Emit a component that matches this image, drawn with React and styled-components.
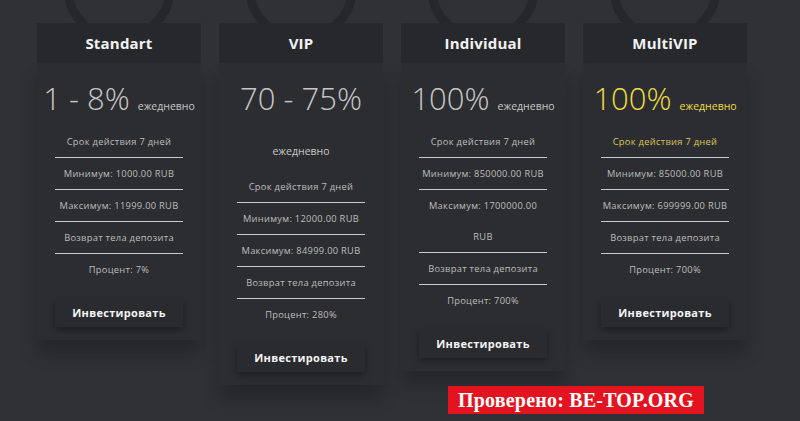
import styled, { createGlobalStyle } from 'styled-components'

const GlobalStyle = createGlobalStyle`
  html, body {
    margin: 0;
    padding: 0;
    background: #303135;
    font-family: "Open Sans", "Liberation Sans", sans-serif;
  }
`

const plans = [
  {
    title: 'Standart',
    rate: '1 - 8%',
    items: ['Срок действия 7 дней', 'Минимум: 1000.00 RUB', 'Максимум: 11999.00 RUB', 'Возврат тела депозита', 'Процент: 7%'],
  },
  {
    title: 'VIP',
    rate: '70 - 75%',
    items: ['Срок действия 7 дней', 'Минимум: 12000.00 RUB', 'Максимум: 84999.00 RUB', 'Возврат тела депозита', 'Процент: 280%'],
  },
  {
    title: 'Individual',
    rate: '100%',
    items: ['Срок действия 7 дней', 'Минимум: 850000.00 RUB', 'Максимум: 1700000.00 RUB', 'Возврат тела депозита', 'Процент: 700%'],
  },
  {
    title: 'MultiVIP',
    rate: '100%',
    gold: true,
    items: ['Срок действия 7 дней', 'Минимум: 85000.00 RUB', 'Максимум: 699999.00 RUB', 'Возврат тела депозита', 'Процент: 700%'],
  },
]

const Page = styled.div`
  position: relative;
  width: 800px;
  height: 421px;
  overflow: hidden;
`

const Row = styled.div`
  display: flex;
  align-items: flex-start;
  gap: 18px;
  padding: 23px 0 0 37px;
`

const Card = styled.div`
  position: relative;
  isolation: isolate;
  width: 164px;
`

const Ring = styled.div`
  position: absolute;
  z-index: -1;
  left: 50%;
  top: -92px;
  width: 112px;
  height: 112px;
  margin-left: -56px;
  box-sizing: border-box;
  border: 9px solid #26272a;
  border-radius: 50%;
  filter: blur(0.6px);
`

const Header = styled.div`
  height: 40px;
  display: flex;
  align-items: center;
  justify-content: center;
  background: #27282c;
  color: #f2f2f2;
  font-size: 15px;
  font-weight: 700;
  letter-spacing: 0.2px;
`

const Body = styled.div`
  background: #2c2d31;
  padding: 0 0 13px;
  box-shadow: 0 14px 16px rgba(0, 0, 0, 0.22);
  display: flex;
  flex-direction: column;
  align-items: center;
`

const Rate = styled.div`
  padding: 13px 0 5px;
  text-align: center;
  font-size: 31px;
  font-weight: 300;
  line-height: 45px;
  color: ${p => (p.$gold ? '#ecdc45' : '#c6c6c6')};
`

const Daily = styled.span`
  font-size: 10.5px;
  font-weight: 400;
  line-height: 1;
`

const List = styled.ul`
  list-style: none;
  margin: 0;
  padding: 0;
  width: 128px;
`

const Item = styled.li`
  text-align: center;
  font-size: 9.3px;
  line-height: 31px;
  letter-spacing: 0.3px;
  color: ${p => (p.$gold ? '#dcc558' : '#bdbdbd')};
  border-bottom: 1px solid #c9c9c9;
  &:last-child {
    border-bottom: none;
  }
`

const Button = styled.button`
  margin-top: 13px;
  width: 128px;
  height: 29px;
  border: none;
  background: #2a2b2f;
  box-shadow: 0 3px 7px rgba(0, 0, 0, 0.35);
  color: #f4f4f4;
  font-family: "Open Sans", "Liberation Sans", sans-serif;
  font-size: 11px;
  font-weight: 700;
  letter-spacing: 0.3px;
  cursor: pointer;
`

const Stamp = styled.div`
  position: absolute;
  left: 448px;
  top: 386px;
  width: 256px;
  height: 28px;
  background: #e3141f;
  color: #fff;
  font-family: "Liberation Serif", "DejaVu Serif", serif;
  font-weight: 700;
  font-size: 20px;
  line-height: 28px;
  text-align: center;
  letter-spacing: 0.2px;
`

function PlanCard({ plan }) {
  return (
    <Card>
      <Ring />
      <Header>{plan.title}</Header>
      <Body>
        <Rate $gold={plan.gold}>
          {plan.rate} <Daily>ежедневно</Daily>
        </Rate>
        <List>
          {plan.items.map((it, i) => (
            <Item key={i} $gold={plan.gold && i === 0}>{it}</Item>
          ))}
        </List>
        <Button>Инвестировать</Button>
      </Body>
    </Card>
  )
}

export default function App() {
  return (
    <Page>
      <GlobalStyle />
      <Row>
        {plans.map(p => <PlanCard key={p.title} plan={p} />)}
      </Row>
      <Stamp>Проверено: BE-TOP.ORG</Stamp>
    </Page>
  )
}
